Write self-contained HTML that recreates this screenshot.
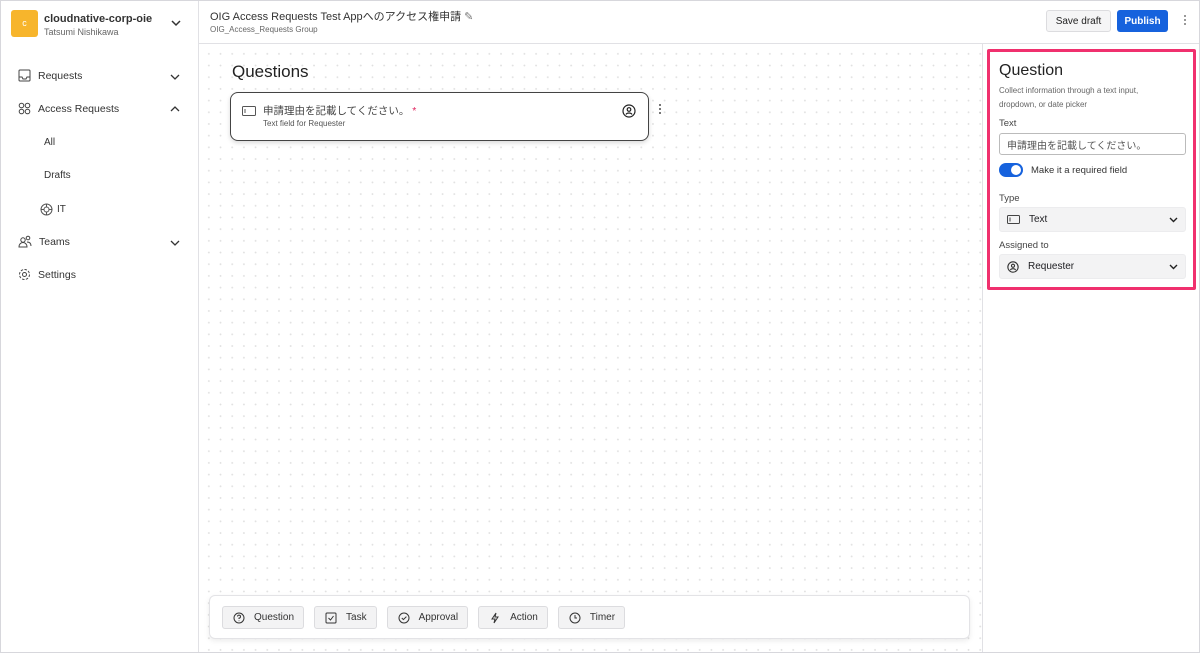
<!DOCTYPE html>
<html><head><meta charset="utf-8"><style>
*{box-sizing:border-box;margin:0;padding:0}
body{width:1200px;height:653px;overflow:hidden;font-family:"Liberation Sans","Noto Sans CJK JP",sans-serif;color:#1d1d21;background:#fff;position:relative}
.frame{position:absolute;inset:0;border:1px solid #d7d7dc;pointer-events:none;z-index:9}
.side{position:absolute;left:0;top:0;width:199px;height:653px;border-right:1px solid #e1e1e5;background:#fff}
.logo{position:absolute;left:11px;top:10px;width:27px;height:27px;background:#f7b52c;border-radius:3px;color:#fff;font-size:9px;text-align:center;line-height:27px}
.org{position:absolute;left:44px;top:13px;font-size:11px;font-weight:bold;color:#333}
.user{position:absolute;left:44px;top:27px;font-size:9px;color:#666}
.nav{position:absolute;left:18px;font-size:10.5px;color:#333;display:flex;align-items:center;gap:7px}
.chev{position:absolute;left:170px}
.sub{position:absolute;left:44px;font-size:10px;color:#333}
.top{position:absolute;left:199px;top:0;right:0;height:44px;border-bottom:1px solid #e1e1e5;background:#fff}
.canvas{position:absolute;left:199px;top:44px;width:783px;height:609px;background-color:#fff;background-image:radial-gradient(circle,#e0e0e0 0.7px,transparent 1.1px);background-size:11.7px 11.7px;background-position:4px 4px}
.right{position:absolute;left:982px;top:44px;width:218px;height:609px;border-left:1px solid #e1e1e5;background:#fff}
.btn{display:inline-flex;align-items:center;gap:9px;height:23px;padding:0 9px 0 10px;background:#f3f3f4;border:1px solid #dcdcdf;border-radius:3px;font-size:10px;color:#333;margin-right:10px}
.field{position:absolute;left:999px;width:187px;height:25px;border-radius:3px;font-size:10px;display:flex;align-items:center;padding:0 7px}
</style></head><body>
<div class="side">
 <div class="logo">c</div>
 <div class="org">cloudnative-corp-oie</div>
 <div class="user">Tatsumi Nishikawa</div>
 <svg style="position:absolute;left:171px;top:19px" width="10" height="8" viewBox="0 0 10 8"><path d="M1 2l4 4 4-4" fill="none" stroke="#333" stroke-width="1.5"/></svg>
 <div class="nav" style="top:69px"><svg width="13" height="13" viewBox="0 0 13 13"><rect x="1" y="1" width="11" height="11" rx="1" fill="none" stroke="#444"/><path d="M1 8h3l1 2h3l1-2h3" fill="none" stroke="#444"/></svg>Requests</div>
 <svg class="chev" style="top:73px" width="10" height="8" viewBox="0 0 10 8"><path d="M1 2l4 4 4-4" fill="none" stroke="#333" stroke-width="1.3"/></svg>
 <div class="nav" style="top:102px"><svg width="13" height="13" viewBox="0 0 13 13" fill="none" stroke="#444"><circle cx="3.5" cy="3.5" r="2.3"/><circle cx="9.5" cy="3.5" r="2.3"/><circle cx="3.5" cy="9.5" r="2.3"/><circle cx="9.5" cy="9.5" r="2.3"/></svg>Access Requests</div>
 <svg class="chev" style="top:105px" width="10" height="8" viewBox="0 0 10 8"><path d="M1 6l4-4 4 4" fill="none" stroke="#333" stroke-width="1.3"/></svg>
 <div class="sub" style="top:137px">All</div>
 <div class="sub" style="top:170px">Drafts</div>
 <div class="sub" style="top:203px;left:40px;display:flex;align-items:center;gap:4px"><svg width="13" height="13" viewBox="0 0 13 13" fill="none" stroke="#555"><circle cx="6.5" cy="6.5" r="5.5"/><circle cx="6.5" cy="6.5" r="2.5"/><path d="M6.5 1v3M6.5 9v3M1 6.5h3M9 6.5h3"/></svg>IT</div>
 <div class="nav" style="top:235px"><svg width="14" height="13" viewBox="0 0 14 13" fill="none" stroke="#444"><circle cx="5" cy="5" r="2.2"/><circle cx="10" cy="3" r="1.8"/><path d="M1 12c0-3 2-4.5 4-4.5s4 1.5 4 4.5zM9 7c2 0 4 1 4 4"/></svg>Teams</div>
 <svg class="chev" style="top:239px" width="10" height="8" viewBox="0 0 10 8"><path d="M1 2l4 4 4-4" fill="none" stroke="#333" stroke-width="1.3"/></svg>
 <div class="nav" style="top:268px"><svg width="13" height="13" viewBox="0 0 13 13" fill="none" stroke="#444"><circle cx="6.5" cy="6.5" r="2"/><circle cx="6.5" cy="6.5" r="5" stroke-dasharray="2.5 1.4"/></svg>Settings</div>
</div>
<div class="top">
 <div style="position:absolute;left:11px;top:8px;font-size:11px;color:#333">OIG Access Requests Test Appへのアクセス権申請 <span style="color:#777">✎</span></div>
 <div style="position:absolute;left:11px;top:25px;font-size:8px;color:#666">OIG_Access_Requests Group</div>
 <div style="position:absolute;left:847px;top:10px;width:65px;height:22px;border:1px solid #dcdcdf;background:#f5f5f6;border-radius:3px;font-size:10px;display:flex;align-items:center;justify-content:center;color:#222">Save draft</div>
 <div style="position:absolute;left:918px;top:10px;width:51px;height:22px;background:#1662dd;border-radius:3px;font-size:10px;font-weight:bold;display:flex;align-items:center;justify-content:center;color:#fff">Publish</div>
 <div style="position:absolute;left:985px;top:15px;width:2px;font-size:0"><div style="width:2px;height:2px;background:#999;margin-bottom:2px"></div><div style="width:2px;height:2px;background:#999;margin-bottom:2px"></div><div style="width:2px;height:2px;background:#999"></div></div>
</div>
<div class="canvas">
 <div style="position:absolute;left:33px;top:18px;font-size:17px;color:#222">Questions</div>
 <div style="position:absolute;left:31px;top:48px;width:419px;height:49px;border:1.5px solid #444;border-radius:8px;background:#fff;box-shadow:0 2px 5px rgba(0,0,0,.15)">
  <svg style="position:absolute;left:11px;top:13px" width="14" height="10" viewBox="0 0 14 10"><rect x=".5" y=".5" width="13" height="9" rx="1" fill="none" stroke="#555"/><path d="M3 3v4" stroke="#555"/></svg>
  <div style="position:absolute;left:32px;top:10px;font-size:10.5px;color:#444">申請理由を記載してください。 <span style="color:#e0245e">*</span></div>
  <div style="position:absolute;left:32px;top:26px;font-size:8px;color:#555">Text field for Requester</div>
  <svg style="position:absolute;left:391px;top:11px" width="14" height="14" viewBox="0 0 14 14" fill="none" stroke="#222" stroke-width="1.2"><circle cx="7" cy="7" r="6"/><circle cx="7" cy="5.5" r="1.8"/><path d="M4 10.5c1-2 5-2 6 0"/></svg>
 </div>
 <div style="position:absolute;left:460px;top:60px;font-size:0"><div style="width:2px;height:2px;background:#777;margin-bottom:2px"></div><div style="width:2px;height:2px;background:#777;margin-bottom:2px"></div><div style="width:2px;height:2px;background:#777"></div></div>
 <div style="position:absolute;left:10px;top:551px;width:761px;height:44px;background:#fff;border:1px solid #e3e3e6;border-radius:6px;box-shadow:0 2px 6px rgba(0,0,0,.08);padding:10px 0 0 12px;display:flex">
  <div class="btn"><svg width="12" height="12" viewBox="0 0 12 12" fill="none" stroke="#333"><circle cx="6" cy="6" r="5"/><path d="M4.5 4.5a1.5 1.5 0 1 1 1.5 1.6V7M6 8.5v.6"/></svg>Question</div>
  <div class="btn"><svg width="12" height="12" viewBox="0 0 12 12" fill="none" stroke="#333"><rect x="1" y="1" width="10" height="10" rx="1"/><path d="M3.5 6l2 2 3-4"/></svg>Task</div>
  <div class="btn"><svg width="12" height="12" viewBox="0 0 12 12" fill="none" stroke="#333"><circle cx="6" cy="6" r="5"/><path d="M3.8 6l1.6 1.6 3-3"/></svg>Approval</div>
  <div class="btn"><svg width="12" height="12" viewBox="0 0 12 12" fill="none" stroke="#333"><path d="M7 1L3 7h3l-1 4 4-6H6z"/></svg>Action</div>
  <div class="btn"><svg width="12" height="12" viewBox="0 0 12 12" fill="none" stroke="#333"><circle cx="6" cy="6" r="5"/><path d="M6 3v3h2"/></svg>Timer</div>
 </div>
</div>
<div class="right"></div>
<div style="position:absolute;left:987px;top:49px;width:209px;height:241px;border:3px solid #f0306e;border-radius:2px"></div>
<div style="position:absolute;left:999px;top:62px;font-size:16px;color:#222">Question</div>
<div style="position:absolute;left:999px;top:84px;width:160px;font-size:8px;line-height:14px;color:#666">Collect information through a text input, dropdown, or date picker</div>
<div style="position:absolute;left:999px;top:118px;font-size:9.5px;color:#444">Text</div>
<div class="field" style="top:133px;height:22px;border:1px solid #bbb;color:#555">申請理由を記載してください。</div>
<div style="position:absolute;left:999px;top:163px;width:24px;height:14px;border-radius:7px;background:#1662dd"><div style="position:absolute;right:2px;top:2px;width:10px;height:10px;border-radius:50%;background:#fff"></div></div>
<div style="position:absolute;left:1031px;top:165px;font-size:9.5px;color:#333">Make it a required field</div>
<div style="position:absolute;left:999px;top:193px;font-size:9.5px;color:#444">Type</div>
<div class="field" style="top:207px;background:#f3f3f4;border:1px solid #ececee"><svg width="13" height="9" viewBox="0 0 13 9"><rect x=".5" y=".5" width="12" height="8" rx="1" fill="none" stroke="#444"/><path d="M3 2.5v4" stroke="#444"/></svg><span style="margin-left:9px">Text</span><svg style="margin-left:auto" width="9" height="6" viewBox="0 0 9 6"><path d="M1 1l3.5 3.5L8 1" fill="none" stroke="#222" stroke-width="1.4"/></svg></div>
<div style="position:absolute;left:999px;top:240px;font-size:9.5px;color:#444">Assigned to</div>
<div class="field" style="top:254px;background:#f3f3f4;border:1px solid #ececee"><svg width="12" height="12" viewBox="0 0 14 14" fill="none" stroke="#333" stroke-width="1.3"><circle cx="7" cy="7" r="6"/><circle cx="7" cy="5.5" r="1.8"/><path d="M4 10.5c1-2 5-2 6 0"/></svg><span style="margin-left:9px">Requester</span><svg style="margin-left:auto" width="9" height="6" viewBox="0 0 9 6"><path d="M1 1l3.5 3.5L8 1" fill="none" stroke="#222" stroke-width="1.4"/></svg></div>
<div class="frame"></div>
</body></html>
